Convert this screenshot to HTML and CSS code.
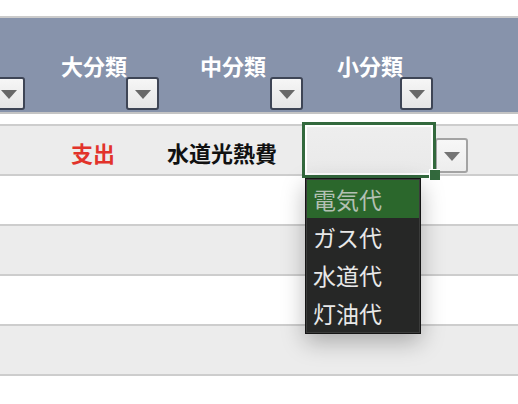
FILE: index.html
```html
<!DOCTYPE html>
<html lang="ja">
<head>
    <meta charset="UTF-8">
    <title>家計簿</title>
    <link rel="stylesheet" href="styles.css">
</head>
<body>
<div class="sheet">
    <div class="head">
        <div class="hcell c1"><span class="filter"><i></i></span></div>
        <div class="hcell c2"><span class="title">大分類</span><span class="filter"><i></i></span></div>
        <div class="hcell c3"><span class="title">中分類</span><span class="filter"><i></i></span></div>
        <div class="hcell c4"><span class="title">小分類</span><span class="filter"><i></i></span></div>
        <div class="hcell c5"></div>
    </div>

    <div class="gap"></div>

    <div class="row alt">
        <div class="cell c1"></div>
        <div class="cell c2 kind">支出</div>
        <div class="cell c3 left">水道光熱費</div>
        <div class="cell c4 active">
            <span class="dd_btn"><i></i></span>
            <div class="selection"><span class="handle"></span></div>
            <ul class="dd_list">
                <li class="on">電気代</li>
                <li>ガス代</li>
                <li>水道代</li>
                <li>灯油代</li>
            </ul>
        </div>
        <div class="cell c5"></div>
    </div>
    <div class="row"></div>
    <div class="row alt"></div>
    <div class="row"></div>
    <div class="row alt"></div>
    <div class="row"></div>
</div>
</body>
</html>
```

FILE: styles.css
```css
body {
    margin: 0;
    padding: 0;
    background: #fff;
    font-family: "Noto Sans CJK JP", "Noto Sans", sans-serif;
    overflow: hidden;
}

.sheet {
    padding-top: 16px;
}

.head {
    display: flex;
    height: 94px;
    background: #8793ab;
    border-top: 2px solid #cbcbcb;
    border-bottom: 2px solid #c4c4c4;
}

.c1 { width: 26px; flex: none; }
.c2 { width: 134px; flex: none; }
.c3 { width: 144px; flex: none; }
.c4 { width: 130px; flex: none; }
.c5 { flex: 1; }

.hcell {
    display: flex;
    flex-direction: column;
    padding-top: 36px;
    box-sizing: border-box;
}

.hcell .title {
    color: #fff;
    font-size: 22px;
    font-weight: bold;
    line-height: 22px;
    text-align: center;
    padding-left: 2px;
}

.filter {
    display: flex;
    align-items: center;
    justify-content: center;
    align-self: flex-end;
    width: 33px;
    height: 33px;
    margin-top: auto;
    margin-right: 1px;
    margin-bottom: 2px;
    box-sizing: border-box;
    border: 2px solid #3e4555;
    border-radius: 3px;
    background: linear-gradient(#f6f6f6, #e6e6e6);
    flex: none;
}

.filter i, .dd_btn i {
    display: block;
    width: 0;
    height: 0;
    border-left: 8px solid transparent;
    border-right: 8px solid transparent;
    border-top: 9px solid #686868;
    margin-top: 1px;
}

.gap {
    height: 10px;
}

.row {
    display: flex;
    height: 48px;
    border-top: 2px solid #cdcdcd;
    background: #fff;
}

.row.alt {
    background: #ececec;
}

.cell {
    font-size: 22px;
    font-weight: bold;
    line-height: 22px;
    padding-top: 15px;
    box-sizing: border-box;
    color: #111;
}

.kind {
    color: #e2332b;
    text-align: center;
}

.left {
    padding-left: 7px;
}

.active {
    position: relative;
}

.selection {
    position: absolute;
    left: -2px;
    right: -2px;
    top: -4px;
    bottom: -4px;
    border: 3px solid #33693d;
    box-shadow: inset 0 0 0 2px #fff;
    background: linear-gradient(#eeeeee, #e9e9e9);
}

.handle {
    position: absolute;
    right: -7px;
    bottom: -5px;
    width: 10px;
    height: 10px;
    background: #33693d;
    border: 1px solid #fff;
    border-right: 0;
    border-bottom: 0;
}

.dd_btn {
    position: absolute;
    left: 131px;
    top: 12px;
    width: 33px;
    height: 35px;
    box-sizing: border-box;
    display: flex;
    align-items: center;
    justify-content: center;
    border: 2px solid #a3a3a3;
    border-radius: 3px;
    background: linear-gradient(#f7f7f7, #ededed);
}

.dd_btn i {
    border-top-color: #747474;
}

.dd_list {
    position: absolute;
    left: 1px;
    top: 52px;
    width: 116px;
    margin: 0;
    padding: 1px;
    list-style: none;
    box-sizing: border-box;
    border: 1px solid #141414;
    background: #3b3c3b;
    box-shadow: 0 8px 22px rgba(0, 0, 0, 0.28);
    z-index: 2;
}

.dd_list li {
    height: 38px;
    line-height: 38px;
    padding-left: 6px;
    font-size: 23px;
    font-weight: normal;
    color: #e8e8e8;
    background: #262726;
}

.dd_list li.on {
    background: #2b672c;
    color: #b3c0b3;
}
```
